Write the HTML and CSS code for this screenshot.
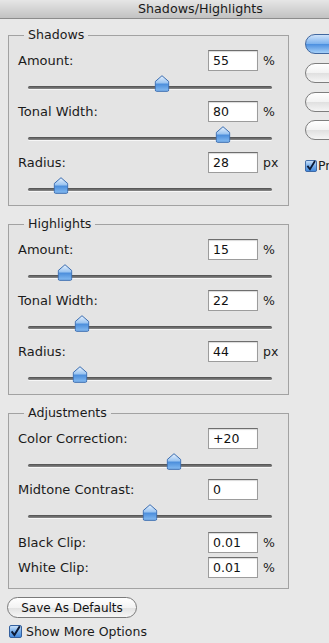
FILE: index.html
```html
<!DOCTYPE html>
<html lang="en">
<head>
  <meta charset="UTF-8" />
  <title>Shadows/Highlights</title>
  <link rel="stylesheet" href="styles.css">
</head>
<body>
  <svg class="defs" width="0" height="0" aria-hidden="true">
    <defs>
      <linearGradient id="thumb-fill" x1="0" y1="0" x2="0" y2="1">
        <stop offset="0" stop-color="#eaf3fd"/>
        <stop offset="0.45" stop-color="#9cc5f1"/>
        <stop offset="0.55" stop-color="#4d8fdc"/>
        <stop offset="1" stop-color="#86bcf2"/>
      </linearGradient>
      <linearGradient id="check-fill" x1="0" y1="0" x2="0" y2="1">
        <stop offset="0" stop-color="#cfe4fa"/>
        <stop offset="0.5" stop-color="#77aeea"/>
        <stop offset="1" stop-color="#3f86dc"/>
      </linearGradient>
      <symbol id="thumb" viewBox="0 0 15 17">
        <path d="M7.5 0.7 L14.3 6.6 V14.8 Q14.3 16.3 12.8 16.3 H2.2 Q0.7 16.3 0.7 14.8 V6.6 Z" fill="url(#thumb-fill)" stroke="#3a6cb0" stroke-width="1"/>
      </symbol>
      <symbol id="check" viewBox="0 0 13 13">
        <rect x="0.5" y="0.5" width="12" height="12" rx="1.5" fill="url(#check-fill)" stroke="#34609e"/>
        <path d="M2.6 6.4 L5.4 10 L10.8 1.2" fill="none" stroke="#0c1a36" stroke-width="2"/>
      </symbol>
    </defs>
  </svg>

  <div class="titlebar">Shadows/Highlights</div>

  <div class="dialog">
    <div class="panels">
      <fieldset class="group">
        <legend>Shadows</legend>
        <div class="field">
          <span class="label">Amount:</span>
          <input class="value" value="55"><span class="unit">%</span>
        </div>
        <div class="slider"><span class="track"><svg class="thumb" style="left: 55%"><use href="#thumb"/></svg></span></div>
        <div class="field">
          <span class="label">Tonal Width:</span>
          <input class="value" value="80"><span class="unit">%</span>
        </div>
        <div class="slider"><span class="track"><svg class="thumb" style="left: 80%"><use href="#thumb"/></svg></span></div>
        <div class="field">
          <span class="label">Radius:</span>
          <input class="value" value="28"><span class="unit">px</span>
        </div>
        <div class="slider"><span class="track"><svg class="thumb" style="left: 13.5%"><use href="#thumb"/></svg></span></div>
      </fieldset>

      <fieldset class="group">
        <legend>Highlights</legend>
        <div class="field">
          <span class="label">Amount:</span>
          <input class="value" value="15"><span class="unit">%</span>
        </div>
        <div class="slider"><span class="track"><svg class="thumb" style="left: 15%"><use href="#thumb"/></svg></span></div>
        <div class="field">
          <span class="label">Tonal Width:</span>
          <input class="value" value="22"><span class="unit">%</span>
        </div>
        <div class="slider"><span class="track"><svg class="thumb" style="left: 22%"><use href="#thumb"/></svg></span></div>
        <div class="field">
          <span class="label">Radius:</span>
          <input class="value" value="44"><span class="unit">px</span>
        </div>
        <div class="slider"><span class="track"><svg class="thumb" style="left: 21.5%"><use href="#thumb"/></svg></span></div>
      </fieldset>

      <fieldset class="group adjust">
        <legend>Adjustments</legend>
        <div class="field">
          <span class="label">Color Correction:</span>
          <input class="value" value="+20"><span class="unit"></span>
        </div>
        <div class="slider"><span class="track"><svg class="thumb" style="left: 60%"><use href="#thumb"/></svg></span></div>
        <div class="field">
          <span class="label">Midtone Contrast:</span>
          <input class="value" value="0"><span class="unit"></span>
        </div>
        <div class="slider"><span class="track"><svg class="thumb" style="left: 50%"><use href="#thumb"/></svg></span></div>
        <div class="field clip">
          <span class="label">Black Clip:</span>
          <input class="value" value="0.01"><span class="unit">%</span>
        </div>
        <div class="field clip white">
          <span class="label">White Clip:</span>
          <input class="value" value="0.01"><span class="unit">%</span>
        </div>
      </fieldset>

      <button class="pill">Save As Defaults</button>
      <label class="check"><svg class="box"><use href="#check"/></svg>Show More Options</label>
    </div>

    <div class="side">
      <button class="side-button default">OK</button>
      <button class="side-button">Cancel</button>
      <button class="side-button">Load...</button>
      <button class="side-button">Save...</button>
      <label class="check preview"><svg class="box"><use href="#check"/></svg>Preview</label>
    </div>
  </div>
</body>
</html>
```

FILE: styles.css
```css
* { margin: 0; padding: 0; box-sizing: border-box; }
body {
  background: #e8e8e8;
  color: #1b1b1b;
  font-family: 'DejaVu Sans', sans-serif;
  font-size: 13px;
  height: 643px;
  overflow: hidden;
}
.defs { position: absolute; }

.titlebar {
  height: 19px;
  line-height: 18px;
  padding-left: 138px;
  font-size: 12.7px;
  color: #1a1a1a;
  background: linear-gradient(#e6e6e6, #c2c2c2);
  border-bottom: 1px solid #8c8c8c;
}

.dialog {
  display: flex;
  padding-top: 9px;
}
.panels {
  width: 289px;
  flex-shrink: 0;
}

/* group boxes */
.group {
  margin: 11px 0 0 8px;
  width: 281px;
  padding: 8px 0 2px;
  border: 1px solid #a2a2a2;
  background: #e4e4e4;
}
.group:first-child { margin-top: 0; }
.group.adjust { padding-bottom: 10px; }
.group legend {
  margin-left: 15px;
  padding: 0 4px;
  line-height: 14px;
  font-size: 12.6px;
}

.field {
  display: flex;
  align-items: center;
  height: 21px;
  padding: 0 9px;
}
.field.clip { margin-top: 2px; }
.field.white { margin-top: 4px; }
.label { flex: 1; }
.value {
  width: 50px;
  height: 21px;
  padding: 0 4px;
  font: 12.5px 'DejaVu Sans', sans-serif;
  color: #111;
  background: #fff;
  border: 1px solid #9c9c9c;
  border-top-color: #6e6e6e;
  box-shadow: inset 0 1px 1px rgba(0, 0, 0, 0.15);
}
.unit {
  width: 21px;
  padding-left: 5px;
  font-size: 12.5px;
}

/* sliders */
.slider {
  height: 30px;
  padding: 15px 16px 0 19px;
}
.track {
  display: block;
  position: relative;
  height: 3px;
  border-radius: 2px;
  background: linear-gradient(#4e4e4e, #8a8a8a);
  box-shadow: 0 1px 0 rgba(255, 255, 255, 0.7);
}
.thumb {
  position: absolute;
  top: -11px;
  width: 15px;
  height: 17px;
  transform: translateX(-50%);
}

/* bottom controls */
.pill {
  display: block;
  margin: 8px 0 0 7px;
  width: 130px;
  height: 21px;
  border-radius: 11px;
  border: 1px solid #7a7a7a;
  background: linear-gradient(#ffffff, #f3f3f3 50%, #e2e2e2 52%, #f6f6f6);
  font: 12px 'DejaVu Sans', sans-serif;
  color: #111;
}
.check {
  display: flex;
  align-items: center;
  gap: 4px;
  margin: 6px 0 0 9px;
  font-size: 12.5px;
}
.box {
  width: 13px;
  height: 13px;
  flex-shrink: 0;
}

/* right button column, clipped by the window edge */
.side {
  flex-shrink: 0;
  width: 100px;
  margin-left: 16px;
  padding-top: 6px;
}
.side-button {
  display: block;
  width: 96px;
  height: 20px;
  margin-bottom: 9px;
  border-radius: 10px;
  border: 1px solid #7e7e7e;
  background: linear-gradient(#ffffff, #f2f2f2 50%, #e0e0e0 52%, #f5f5f5);
  font: 12px 'DejaVu Sans', sans-serif;
  color: #111;
}
.side-button.default {
  border-color: #41679f;
  background: linear-gradient(#cfe3fa, #7fb3ee 48%, #4d90e0 52%, #a6d0f8);
}
.side-button:nth-child(4) { margin-bottom: 0; margin-top: -1px; }
.check.preview {
  margin: 18px 0 0 0;
  gap: 1px;
}
.check.preview .box { width: 12px; height: 12px; }
```
